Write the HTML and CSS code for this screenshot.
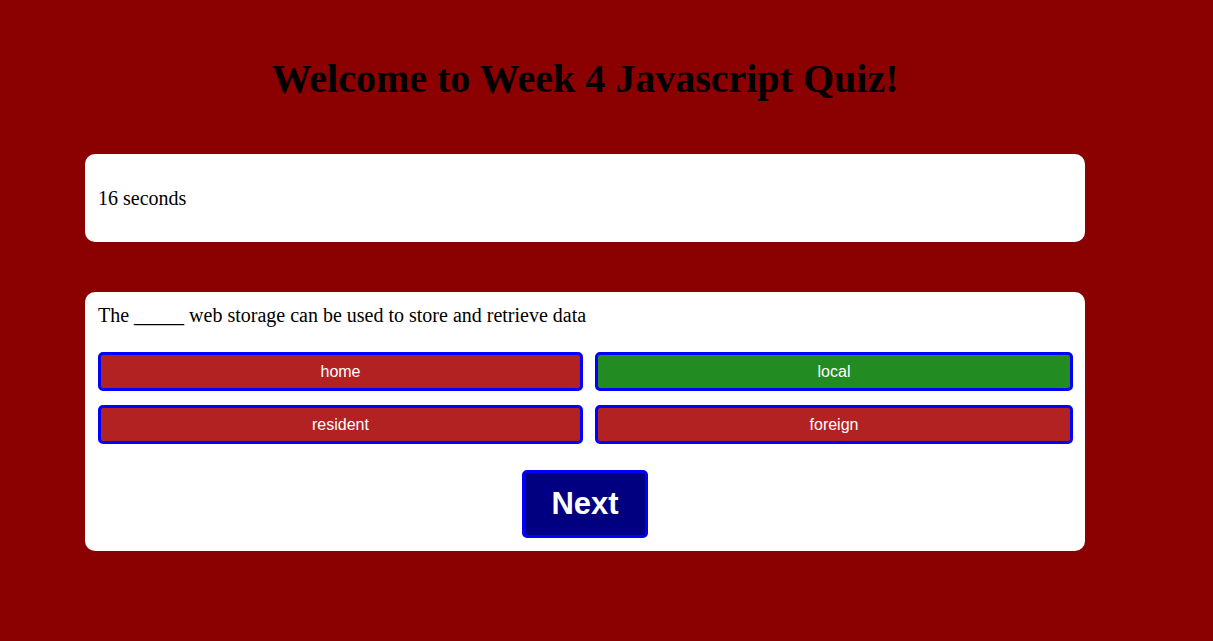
FILE: index.html
```html
<!DOCTYPE html>
<html>
<head>
<meta charset="utf-8">
<link rel="stylesheet" href="styles.css">
</head>
<body>
<div class="page">
  <h1 class="title">Welcome to Week 4 Javascript Quiz!</h1>
  <div class="card timer">16 seconds</div>
  <div class="card quiz">
    <div class="question">The _____ web storage can be used to store and retrieve data</div>
    <div class="answers">
      <button class="answer wrong">home</button>
      <button class="answer right">local</button>
      <button class="answer wrong">resident</button>
      <button class="answer wrong">foreign</button>
    </div>
    <div class="actions">
      <button class="next">Next</button>
    </div>
  </div>
</div>
</body>
</html>
```
FILE: styles.css
```css
html, body {
  margin: 0;
  padding: 0;
  background: #8b0000;
}
body {
  font-family: "Liberation Serif", "Times New Roman", serif;
}
.page {
  width: 1000px;
  margin-left: 85px;
  padding-top: 56px;
}
.title {
  text-align: center;
  font-size: 40px;
  font-weight: bold;
  margin: 0 0 52px 0;
  line-height: 46px;
}
.card {
  background: #fff;
  border-radius: 10px;
  box-sizing: border-box;
}
.timer {
  height: 88px;
  padding: 0 13px;
  display: flex;
  align-items: center;
  font-size: 20px;
  margin-bottom: 50px;
}
.quiz {
  padding: 12px 12px 13px 13px;
}
.question {
  font-size: 20px;
  line-height: 23px;
}
.answers {
  margin-top: 25px;
  display: grid;
  grid-template-columns: 485px 478px;
  column-gap: 12px;
  row-gap: 14px;
}
.answer {
  height: 39px;
  border: 3px solid #0000ff;
  border-radius: 5px;
  color: #fff;
  font-family: "Liberation Sans", Arial, sans-serif;
  font-size: 16px;
  margin: 0;
  padding: 0;
}
.wrong { background: #b22222; }
.right { background: #228b22; }
.actions {
  display: flex;
  justify-content: center;
  margin-top: 26px;
  padding-right: 1px;
}
.next {
  width: 126px;
  height: 68px;
  background: #000080;
  color: #fff;
  border: 3px solid #0000ff;
  border-radius: 5px;
  font-family: "Liberation Sans", Arial, sans-serif;
  font-weight: bold;
  font-size: 31px;
  margin: 0;
  padding: 0;
}
```
